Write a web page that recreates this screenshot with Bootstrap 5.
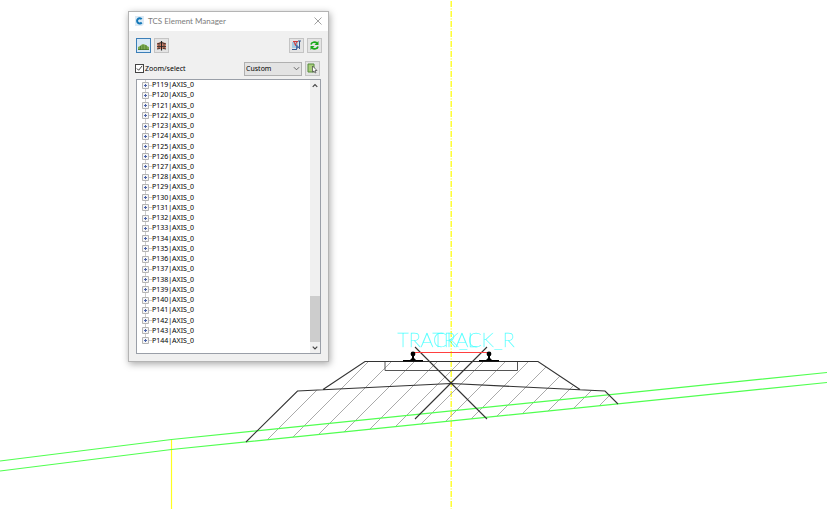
<!DOCTYPE html>
<html lang="en">
<head>
<meta charset="utf-8">
<meta name="viewport" content="width=device-width, initial-scale=1">
<title>TCS Element Manager</title>
<link href="https://cdn.jsdelivr.net/npm/bootstrap@5.3.0/dist/css/bootstrap.min.css" rel="stylesheet">
<style>
body { background: #fff; font-family: "Noto Sans", "Liberation Sans", sans-serif; font-size: 7px; line-height: 10px; color: #000; }
.drawing { min-height: 100vh; overflow: hidden; }
.drawing > svg { width: 100%; height: auto; }
.cad-text { font-family: Lato, "Liberation Sans", sans-serif; font-weight: 100; font-size: 20px; fill: #0ff; stroke: #4ff; stroke-width: .3; }
.manager { left: 128px; top: 11px; width: 201px; background: #f0f0f0; border: 1px solid #b4b4b4; box-shadow: 1px 2px 7px rgba(0,0,0,.35); }
.title-bar { height: 19px; background: #fff; padding: 0 6px 2px; color: #7c7c7c; font-family: Lato, "Open Sans", sans-serif; }
.title-bar h1 { font-size: 8px; line-height: 16px; font-weight: 400; }
.plain { border: 0; background: none; padding: 0; line-height: 0; }
.manager-body { padding: 7px; }
.tool-row { margin-right: -1px; gap: 3px; }
.tool { width: 15px; height: 15px; padding: 0; border: 1px solid #c4c4c4; border-radius: 0; background: #e4e4e4; display: flex; align-items: center; justify-content: center; }
.tool.active { border-color: #3c7fb8; background: #d9e9f6; }
.filter-row { margin-top: 8px; height: 15px; gap: 1px; padding-right: 1px; }
.tick { appearance: none; width: 9px; height: 9px; margin: 0 0 0 -1px; border: 1px solid #444; background: #fff; }
.tick:checked { background: #fff url("data:image/svg+xml,%3Csvg xmlns='http://www.w3.org/2000/svg' viewBox='0 0 8 8'%3E%3Cpath d='M1 4l2 2 4-5' fill='none' stroke='%23222'/%3E%3C/svg%3E"); }
.combo { appearance: none; width: 58px; height: 14px; padding: 0 1px; margin-right: 2px; border: 1px solid #b0b0b0; border-radius: 0; color: #000; font-size: 7px; line-height: 10px; background: #e3e3e3 url("data:image/svg+xml,%3Csvg xmlns='http://www.w3.org/2000/svg' viewBox='0 0 8 8'%3E%3Cpath d='M1 2.500l3 3 3-3' fill='none' stroke='%23555'/%3E%3C/svg%3E") no-repeat right 1px center / 7px 7px; }
.tree-box { margin-top: 3px; height: 275px; background: #fff; border: 1px solid #9a9fa8; }
.tree { height: 266px; padding-left: 5px; background: linear-gradient(#ccc, #ccc) 8px 0 / 1px 261px no-repeat; }
.tree li { flex: 1 1 0; display: flex; align-items: center; min-height: 0; }
.toggle { width: 7px; height: 7px; }
.stub { width: 3px; height: 1px; background: #ccc; }
.scroll { width: 10px; background: #f0f0f0; }
.thumb { height: 46px; background: #cdcdcd; }
.arrow { height: 11px; }
</style>
<script src="https://cdn.jsdelivr.net/npm/bootstrap@5.3.0/dist/js/bootstrap.bundle.min.js"></script>
</head>
<body>
<main class="drawing position-relative">
  <svg class="d-block" viewBox="0 0 827 509" fill="none" role="img" aria-label="Track cross section">
    <defs>
      <clipPath id="section"><path d="M246 442L298 391L323 390L365 362H538L580 390L605 391L618 404Z"/></clipPath>
      <g id="rail" fill="#000"><circle cy="-7" r="2.400"/><path d="M-1 -7h2v4l2 2h7v1.500h-20v-1.500h7l2-2z"/></g>
    </defs>
    <path d="M451.200 1V509" stroke="#ffff20" stroke-width="1.400" stroke-dasharray="6 1.500 1 1.500"/>
    <path d="M171.500 440V509" stroke="#ffff20" stroke-width="1.200"/>
    <g class="cad-text"><text x="397" y="347">TRACK_L</text><text x="432" y="347">TRACK_R</text></g>
    <g id="hatch" clip-path="url(#section)" stroke="#aaa"></g>
    <path d="M0 461L171.500 439.500L827 372.500M0 471L171.500 449.500L827 382.500" stroke="#50ff50" stroke-width="1.200"/>
    <path d="M246 442L297.500 391L451 383.500L605 391L618 404M323 389.500L365 361.500H538L580 389.500" stroke="#333" stroke-width="1.100"/>
    <path d="M385 362V370.500H517.500V362" stroke="#555"/>
    <path d="M415 347L487 419M487 347L415 419" stroke="#333" stroke-width="1.100"/>
    <path d="M413 352.500H490" stroke="#ff4040"/>
    <use href="#rail" x="413" y="361"/><use href="#rail" x="489" y="361"/>
  </svg>

  <section class="manager position-absolute" aria-label="TCS Element Manager">
    <header class="title-bar d-flex align-items-center">
      <svg width="9" height="10" viewBox="0 0 9 10"><path d="M0 0h9v8l-2 2H0z" fill="#dceaf5"/><path d="M6.700 3.200A2.600 2.600 0 1 0 6.700 6.500" fill="none" stroke="#1378b8" stroke-width="2"/></svg>
      <h1 class="m-0 ms-1 flex-grow-1">TCS Element Manager</h1>
      <button class="plain" type="button" aria-label="Close"><svg width="8" height="8" viewBox="0 0 8 8"><path d="M.5 .5l7 7m0-7l-7 7" stroke="#888" stroke-width=".8"/></svg></button>
    </header>
    <div class="manager-body">
      <div class="tool-row d-flex">
        <button class="tool active" type="button" aria-label="Cross section"><svg width="11" height="11" viewBox="0 0 11 11"><path d="M0 10V7l2-1 1-1 2-1 3 1 1 1 2 1v3z" fill="#7dab50"/><path d="M0 9.500h11M2.500 6v4M5 5v5M8 5v5" stroke="#42702c" stroke-width=".7"/></svg></button>
        <button class="tool" type="button" aria-label="Track"><svg width="11" height="11" viewBox="0 0 11 11"><path d="M1 3l4.500-1L10 3v6H1z" fill="#e08a70"/><path d="M1 4l4.500-1.500L10 4M1 6.500h9M1 9l3-.5M7 8.500l3 .5M3 3v6M8 3v6" stroke="#4a3a35" fill="none"/><path d="M5.500 1v9.500" stroke="#222" stroke-width="1.200"/></svg></button>
        <button class="tool ms-auto" type="button" aria-label="Pick element"><svg width="11" height="11" viewBox="0 0 11 11"><path d="M1 2h6v6H1z" fill="#a4cbe2"/><path d="M2 1.500h5M3 2l2 4M6 2L4 5" stroke="#d03838"/><path d="M8.500 1v8M7 1h3M1 9.500h5" stroke="#34578c" fill="none"/><path d="M5 4l4 4H7l-2 2z" fill="#4d6fa5"/></svg></button>
        <button class="tool" type="button" aria-label="Refresh"><svg width="11" height="11" viewBox="0 0 11 11" fill="none" stroke="#18a818" stroke-width="1.600"><path d="M2 4.500C2.500 2 6 1.500 8 3M9 6.500C8.500 9 5 9.500 3 8"/><path d="M9.500 1v4h-4zM1.500 10V6h4z" fill="#18a818" stroke="none"/></svg></button>
      </div>
      <div class="filter-row d-flex align-items-center">
        <input class="tick" type="checkbox" id="zoomSelect" checked>
        <label for="zoomSelect">Zoom/select</label>
        <select class="combo ms-auto" aria-label="Filter"><option>Custom</option></select>
        <button class="tool" type="button" aria-label="Select from drawing"><svg width="11" height="11" viewBox="0 0 11 11"><path d="M1 1h6v8H1z" fill="#a9cd7c" stroke="#568b3c"/><path d="M5.500 3l4.500 4.500H8l1 2-1 .5-1-2-1.500 1z" fill="#fff" stroke="#444" stroke-width=".7"/></svg></button>
      </div>
      <div class="tree-box d-flex">
        <ul class="tree list-unstyled m-0 flex-grow-1 d-flex flex-column" id="tree"></ul>
        <div class="scroll d-flex flex-column" aria-hidden="true">
          <svg class="arrow" viewBox="0 0 11 11"><path d="M3 7l2.500-2.500L8 7" fill="none" stroke="#444" stroke-width="1.300"/></svg>
          <div class="thumb mt-auto"></div>
          <svg class="arrow" viewBox="0 0 11 11"><path d="M3 4.500L5.500 7 8 4.500" fill="none" stroke="#444" stroke-width="1.300"/></svg>
        </div>
      </div>
    </div>
  </section>
</main>
<script>
const tree = document.getElementById('tree');
for (let n = 119; n <= 144; n++) {
  tree.insertAdjacentHTML('beforeend', `<li><button class="plain" type="button" aria-label="Expand P${n}"><svg class="toggle" viewBox="0 0 7 7"><path d="M.5 .5h6v6h-6z" fill="#f5f5f5" stroke="#b4b4b4"/><path d="M2 3.500h3M3.500 2v3" stroke="#4a62a8"/></svg></button><span class="stub"></span><span>P${n}|AXIS_0</span></li>`);
}
let d = '';
for (let k = 0; k < 14; k++) {
  const sum = Math.round(707 + k * 22.92);
  d += `M${sum - 450} 450L${sum - 350} 350`;
}
document.getElementById('hatch').innerHTML = `<path d="${d}"/>`;
</script>
</body>
</html>
